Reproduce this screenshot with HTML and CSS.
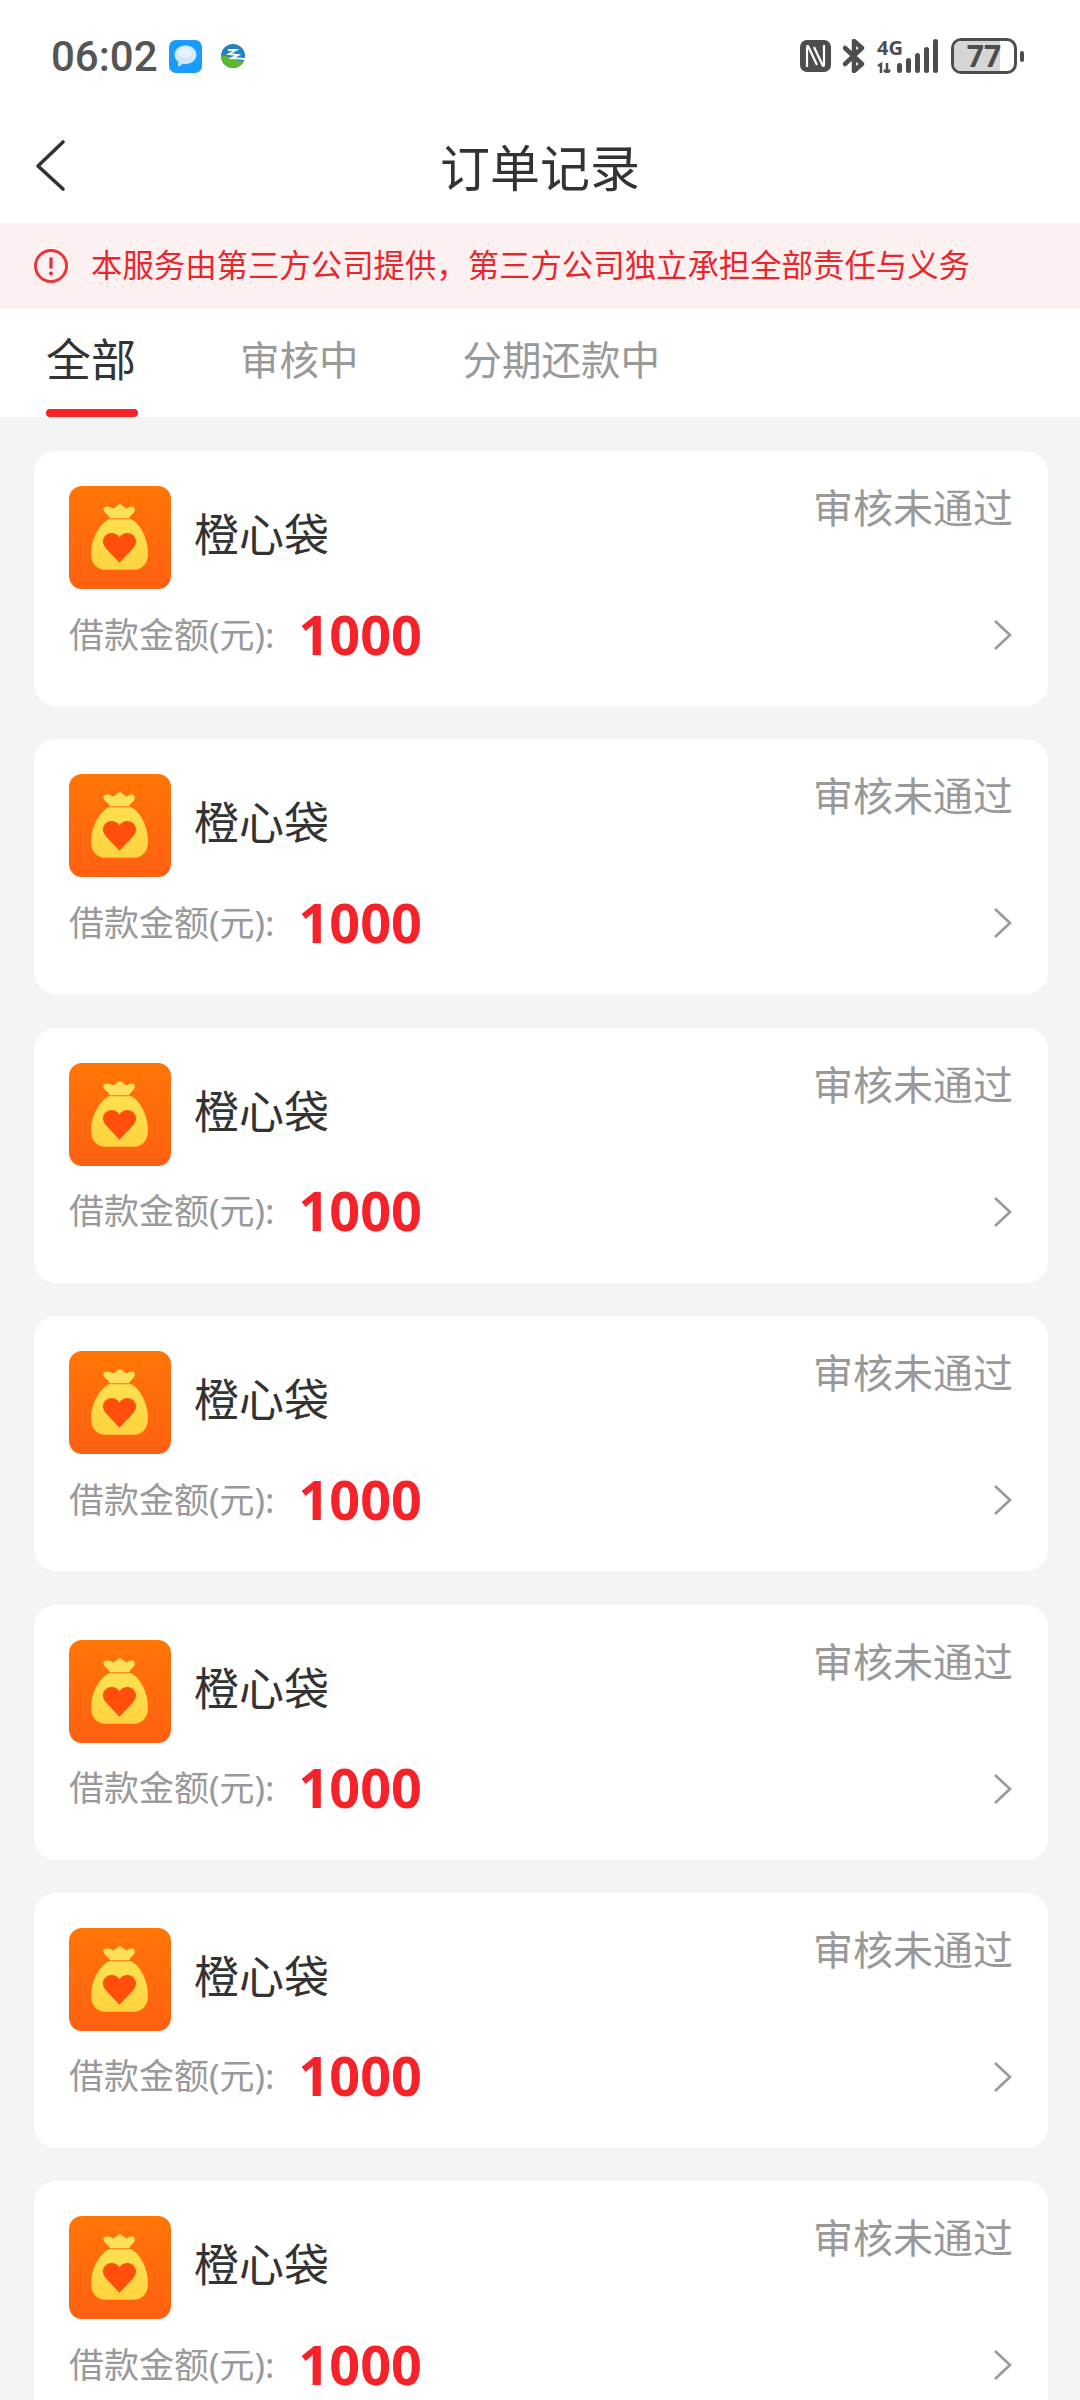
FILE: index.html
```html
<!DOCTYPE html>
<html lang="zh-CN">
<head>
	<meta charset="UTF-8">
	<title>订单记录</title>
	<link rel="stylesheet" href="styles.css">
</head>
<body>
	<svg class="defs" width="0" height="0">
		<defs>
			<linearGradient id="bg-orange" x1="0" y1="0" x2="0" y2="1">
				<stop offset="0" stop-color="#ff7606"/>
				<stop offset="1" stop-color="#ff6012"/>
			</linearGradient>
			<linearGradient id="bg-bag" x1="0" y1="0" x2="0" y2="1">
				<stop offset="0" stop-color="#ffe04f"/>
				<stop offset="1" stop-color="#ffd23e"/>
			</linearGradient>
			<symbol id="bag" viewBox="0 0 102 102" preserveAspectRatio="none">
				<rect width="102" height="102" rx="13" fill="url(#bg-orange)"/>
				<path d="M35 21c4-2 8 1 10 1 2-1 4-4 6-4s4 3 6 4c2 0 5-3 8-1 2 2 0 6-3 8l-2 3H41l-2-3c-3-2-6-6-4-8z" fill="#ffe05c"/>
				<path d="M40 33h22c10 5 17 20 17 34 0 10-6 16-15 16H37c-9 0-15-6-15-16 0-14 8-29 18-34z" fill="url(#bg-bag)"/>
				<path d="M50.500 76 38 63c-3-3-4-6-4-8 0-5 4-8.500 8.500-8.500 3.500 0 6.500 1.500 8 4.500 1.500-3 4.500-4.500 8-4.500 4.500 0 8.500 3.500 8.500 8.500 0 2-1 5-4 8z" fill="#ff4f0a"/>
			</symbol>
		</defs>
	</svg>

	<div class="status-bar">
		<div class="status-left">
			<span class="time">06:02</span>
			<svg class="app-msg" viewBox="0 0 33 33">
				<rect width="33" height="33" rx="7" fill="#1a9cfe"/>
				<path d="M16.500 5.500c6 0 11 4.200 11 9.300s-5 9.200-11 9.200c-.8 0-1.600 0-2.300-.2L9 27l.3-5.200C7 20.200 5.500 17.700 5.500 14.800c0-5.100 5-9.300 11-9.300z" fill="#cfe8fd"/>
				<ellipse cx="16" cy="13" rx="7" ry="5" fill="#e6f3fe"/>
			</svg>
			<svg class="app-globe" viewBox="0 0 24 24">
				<circle cx="12" cy="12" r="12" fill="#1f84c0"/>
				<path d="M0 11c0 7.500 5 13 12 13 5 0 9-3 11-7-6 1-10-2-14-4z" fill="#5cb82e"/>
				<path d="M7 6h8l-7 4 9 1-6 3 13 1" fill="none" stroke="#f2f7f5" stroke-width="2"/>
			</svg>
		</div>
		<div class="status-right">
			<svg class="ic-nfc" viewBox="0 0 31 32">
				<rect x="0" y="0" width="31" height="32" rx="7" fill="#4d4d4d"/>
				<path d="M7 27V7c0-1 .8-1.300 1.300-.4L17 25M24 5v20c0 1-.8 1.300-1.300.4L14 7" fill="none" stroke="#fff" stroke-width="2.200"/>
			</svg>
			<svg class="ic-bt" viewBox="0 0 22 34">
				<path d="M2 9l17 16-8 7V2l8 7L2 25" fill="none" stroke="#4d4d4d" stroke-width="4.500" stroke-linejoin="round" stroke-linecap="round"/>
			</svg>
			<div class="signal">
				<span class="net-text">4G</span>
				<svg class="ic-signal" viewBox="0 0 62 34">
					<path d="M1 27l3-2v9M10 24v10M10 34l-3-3M10 34l3-3" fill="none" stroke="#4d4d4d" stroke-width="2.500"/>
					<rect x="20" y="24" width="5" height="10" rx="2.500" fill="#4d4d4d"/>
					<rect x="29" y="19" width="5" height="15" rx="2.500" fill="#4d4d4d"/>
					<rect x="38" y="14" width="5" height="20" rx="2.500" fill="#4d4d4d"/>
					<rect x="47" y="8" width="5" height="26" rx="2.500" fill="#4d4d4d"/>
					<rect x="56" y="0" width="5" height="34" rx="2.500" fill="#4d4d4d"/>
				</svg>
			</div>
			<div class="battery">
				<div class="battery-body">
					<div class="battery-fill"></div>
					<span class="battery-num">77</span>
				</div>
				<div class="battery-nub"></div>
			</div>
		</div>
	</div>

	<div class="nav-bar">
		<svg class="nav-back" viewBox="0 0 32 54">
			<path d="M28 3 3 27l25 23" fill="none" stroke="#333" stroke-width="3.600" stroke-linecap="round" stroke-linejoin="round"/>
		</svg>
		<div class="nav-title">订单记录</div>
	</div>

	<div class="notice">
		<svg class="notice-icon" viewBox="0 0 36 36">
			<circle cx="18" cy="18" r="15.500" fill="none" stroke="#e8383d" stroke-width="3"/>
			<rect x="16.300" y="9" width="3.400" height="12" rx="1.700" fill="#e8383d"/>
			<circle cx="18" cy="25.500" r="2" fill="#e8383d"/>
		</svg>
		<span class="notice-text">本服务由第三方公司提供，第三方公司独立承担全部责任与义务</span>
	</div>

	<div class="tabs">
		<div class="tab tab-active">全部</div>
		<div class="tab">审核中</div>
		<div class="tab">分期还款中</div>
	</div>

	<div class="list">
		<div class="card">
			<div class="card-top">
				<svg class="card-logo"><use href="#bag"/></svg>
				<span class="card-name">橙心袋</span>
				<span class="card-status">审核未通过</span>
			</div>
			<div class="card-bottom">
				<span class="amount-label">借款金额(元):</span>
				<span class="amount">1000</span>
				<svg class="card-arrow" viewBox="0 0 20 32"><path d="M2 2l15 14L2 30" fill="none" stroke="#999" stroke-width="2.600"/></svg>
			</div>
		</div>
		<div class="card">
			<div class="card-top">
				<svg class="card-logo"><use href="#bag"/></svg>
				<span class="card-name">橙心袋</span>
				<span class="card-status">审核未通过</span>
			</div>
			<div class="card-bottom">
				<span class="amount-label">借款金额(元):</span>
				<span class="amount">1000</span>
				<svg class="card-arrow" viewBox="0 0 20 32"><path d="M2 2l15 14L2 30" fill="none" stroke="#999" stroke-width="2.600"/></svg>
			</div>
		</div>
		<div class="card">
			<div class="card-top">
				<svg class="card-logo"><use href="#bag"/></svg>
				<span class="card-name">橙心袋</span>
				<span class="card-status">审核未通过</span>
			</div>
			<div class="card-bottom">
				<span class="amount-label">借款金额(元):</span>
				<span class="amount">1000</span>
				<svg class="card-arrow" viewBox="0 0 20 32"><path d="M2 2l15 14L2 30" fill="none" stroke="#999" stroke-width="2.600"/></svg>
			</div>
		</div>
		<div class="card">
			<div class="card-top">
				<svg class="card-logo"><use href="#bag"/></svg>
				<span class="card-name">橙心袋</span>
				<span class="card-status">审核未通过</span>
			</div>
			<div class="card-bottom">
				<span class="amount-label">借款金额(元):</span>
				<span class="amount">1000</span>
				<svg class="card-arrow" viewBox="0 0 20 32"><path d="M2 2l15 14L2 30" fill="none" stroke="#999" stroke-width="2.600"/></svg>
			</div>
		</div>
		<div class="card">
			<div class="card-top">
				<svg class="card-logo"><use href="#bag"/></svg>
				<span class="card-name">橙心袋</span>
				<span class="card-status">审核未通过</span>
			</div>
			<div class="card-bottom">
				<span class="amount-label">借款金额(元):</span>
				<span class="amount">1000</span>
				<svg class="card-arrow" viewBox="0 0 20 32"><path d="M2 2l15 14L2 30" fill="none" stroke="#999" stroke-width="2.600"/></svg>
			</div>
		</div>
		<div class="card">
			<div class="card-top">
				<svg class="card-logo"><use href="#bag"/></svg>
				<span class="card-name">橙心袋</span>
				<span class="card-status">审核未通过</span>
			</div>
			<div class="card-bottom">
				<span class="amount-label">借款金额(元):</span>
				<span class="amount">1000</span>
				<svg class="card-arrow" viewBox="0 0 20 32"><path d="M2 2l15 14L2 30" fill="none" stroke="#999" stroke-width="2.600"/></svg>
			</div>
		</div>
		<div class="card">
			<div class="card-top">
				<svg class="card-logo"><use href="#bag"/></svg>
				<span class="card-name">橙心袋</span>
				<span class="card-status">审核未通过</span>
			</div>
			<div class="card-bottom">
				<span class="amount-label">借款金额(元):</span>
				<span class="amount">1000</span>
				<svg class="card-arrow" viewBox="0 0 20 32"><path d="M2 2l15 14L2 30" fill="none" stroke="#999" stroke-width="2.600"/></svg>
			</div>
		</div>
	</div>
</body>
</html>
```

FILE: styles.css
```css
/* reset */
* {
	margin: 0;
	padding: 0;
	box-sizing: border-box;
}
html, body {
	height: 2400px;
	overflow: hidden;
}
body {
	font-family: "Noto Sans", "Noto Sans CJK SC", sans-serif;
	background: #f4f4f4;
	color: #333;
}
.defs {
	display: block;
	height: 0;
}

/* status bar */
.status-bar {
	display: flex;
	align-items: center;
	justify-content: space-between;
	height: 112px;
	padding: 0 56px 0 51px;
	background: white;
}
.status-left, .status-right {
	display: flex;
	align-items: center;
}
.time {
	padding-top: 2px;
	font-family: Roboto, sans-serif;
	font-size: 42px;
	font-weight: 500;
	color: #555;
	line-height: 50px;
}
.app-msg {
	width: 33px;
	height: 33px;
	margin-left: 11px;
}
.app-globe {
	width: 24px;
	height: 24px;
	margin-left: 19px;
}
.ic-nfc {
	width: 31px;
	height: 32px;
}
.ic-bt {
	width: 22px;
	height: 34px;
	margin-left: 12px;
}
.signal {
	position: relative;
	width: 62px;
	height: 34px;
	margin-left: 12px;
}
.ic-signal {
	display: block;
	width: 62px;
	height: 34px;
}
.net-text {
	position: absolute;
	left: 0;
	top: 0;
	font-size: 20px;
	font-weight: 700;
	line-height: 17px;
	color: #4d4d4d;
}
.battery {
	display: flex;
	align-items: center;
	margin-left: 12px;
}
.battery-body {
	position: relative;
	width: 66px;
	height: 36px;
	border: 3px solid #4d4d4d;
	border-radius: 10px;
	text-align: center;
}
.battery-fill {
	position: absolute;
	left: 0;
	top: 0;
	bottom: 0;
	width: 77%;
	border-radius: 7px 0 0 7px;
	background: #d6d6d6;
}
.battery-num {
	position: relative;
	display: block;
	font-size: 30px;
	font-weight: 700;
	line-height: 30px;
	color: #4d4d4d;
}
.battery-nub {
	width: 4px;
	height: 11px;
	margin-left: 3px;
	border-radius: 2px;
	background: #4d4d4d;
}

/* nav */
.nav-bar {
	position: relative;
	height: 111px;
	padding-bottom: 4px;
	background: white;
	display: flex;
	align-items: center;
	justify-content: center;
}
.nav-back {
	position: absolute;
	left: 35px;
	top: 27px;
	width: 32px;
	height: 54px;
}
.nav-title {
	font-size: 50px;
	color: #333;
}

/* notice */
.notice {
	display: flex;
	align-items: center;
	height: 86px;
	padding-left: 33px;
	background: #fdf0f0;
}
.notice-icon {
	width: 36px;
	height: 36px;
	margin-right: 22px;
}
.notice-text {
	padding-bottom: 5px;
	font-size: 31.4px;
	color: #e8272d;
	white-space: nowrap;
}

/* tabs */
.tabs {
	display: flex;
	height: 108px;
	padding-left: 46px;
	gap: 104px;
	background: white;
}
.tab {
	position: relative;
	font-size: 39.500px;
	line-height: 102px;
	color: #999;
}
.tab-active {
	font-size: 45px;
	color: #333;
}
.tab-active::after {
	content: "";
	position: absolute;
	left: 0;
	right: -2px;
	bottom: 0;
	height: 8px;
	border-radius: 4px;
	background: #f5222a;
}

/* list */
.list {
	display: flex;
	flex-direction: column;
	gap: 33.400px;
	padding: 34px 32px 0 34px;
}
.card {
	flex: none;
	height: 255px;
	padding: 35px 35px 0 35px;
	border-radius: 22px;
	background: white;
}
.card-top {
	display: flex;
	height: 103px;
}
.card-logo {
	width: 102px;
	height: 103px;
}
.card-name {
	margin-left: 23px;
	font-size: 45px;
	line-height: 98px;
	color: #333;
}
.card-status {
	margin-left: auto;
	font-size: 40px;
	line-height: 44px;
	color: #999;
}
.card-bottom {
	display: flex;
	align-items: center;
	height: 60px;
	margin-top: 13px;
}
.amount-label {
	font-size: 35px;
	color: #999;
	white-space: nowrap;
}
.amount {
	margin: 3px 0 0 24px;
	font-size: 54px;
	font-weight: 700;
	color: #f5222a;
}
.card-arrow {
	width: 20px;
	height: 32px;
	margin: 6px 0 0 auto;
}
```
